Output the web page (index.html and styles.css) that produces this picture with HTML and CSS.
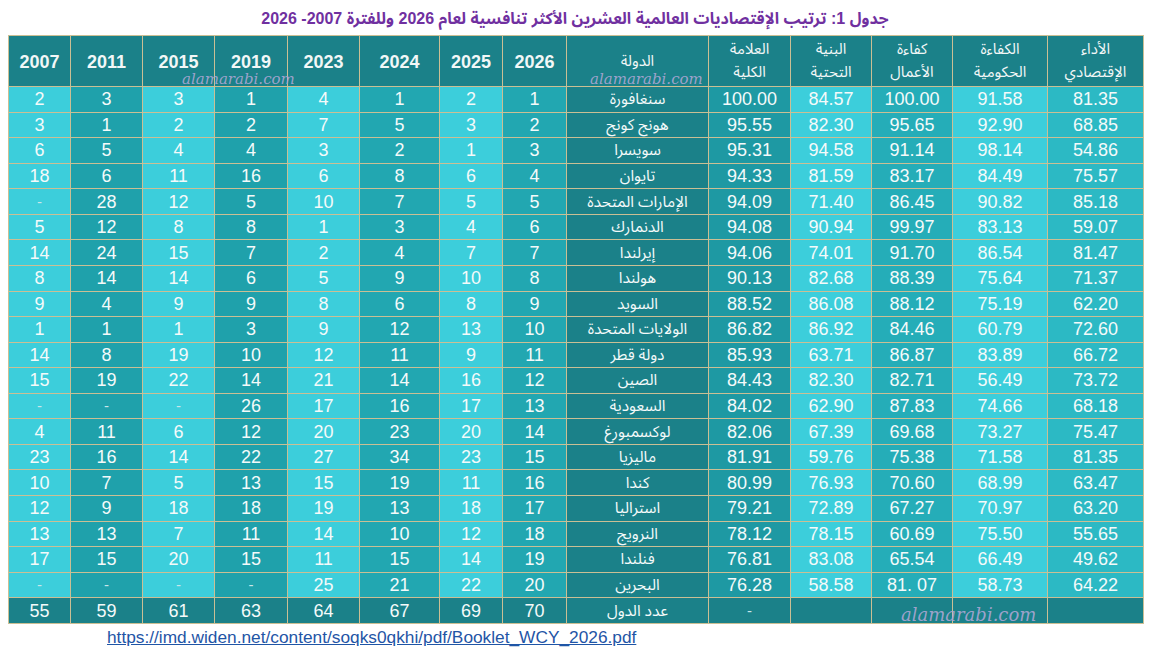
FILE: index.html
```html
<!DOCTYPE html>
<html lang="ar">
<head>
<meta charset="utf-8">
<title>جدول 1</title>
<link rel="stylesheet" href="styles.css">
</head>
<body>
<div class="page">
  <h1 class="title" dir="rtl">جدول 1:  ترتيب الإقتصاديات العالمية العشرين الأكثر تنافسية لعام 2026 وللفترة 2007- 2026</h1>
  <div class="table-wrap">
    <table class="rank">
      <colgroup>
        <col class="w62"><col class="w72"><col class="w72"><col class="w73"><col class="w72"><col class="w80"><col class="w63"><col class="w64">
        <col class="w142"><col class="w82"><col class="w81"><col class="w81"><col class="w95"><col class="w96">
      </colgroup>
      <thead>
        <tr>
          <th>2007</th><th>2011</th><th>2015</th><th>2019</th><th>2023</th><th>2024</th><th>2025</th><th>2026</th>
          <th class="ar">الدولة</th>
          <th class="ar"><span class="ln">العلامة</span><span class="ln">الكلية</span></th>
          <th class="ar"><span class="ln">البنية</span><span class="ln">التحتية</span></th>
          <th class="ar"><span class="ln">كفاءة</span><span class="ln">الأعمال</span></th>
          <th class="ar"><span class="ln">الكفاءة</span><span class="ln">الحكومية</span></th>
          <th class="ar"><span class="ln">الأداء</span><span class="ln">الإقتصادي</span></th>
        </tr>
      </thead>
      <tbody id="rows"></tbody>
    </table>
    <span class="wm wm1">alamarabi.com</span>
    <span class="wm wm2">alamarabi.com</span>
    <span class="wm wm3">alamarabi.com</span>
  </div>
  <a class="src" href="#">https://imd.widen.net/content/soqks0qkhi/pdf/Booklet_WCY_2026.pdf</a>
</div>
<script>
const data = [
["2","3","3","1","4","1","2","1","سنغافورة","100.00","84.57","100.00","91.58","81.35"],
["3","1","2","2","7","5","3","2","هونج كونج","95.55","82.30","95.65","92.90","68.85"],
["6","5","4","4","3","2","1","3","سويسرا","95.31","94.58","91.14","98.14","54.86"],
["18","6","11","16","6","8","6","4","تايوان","94.33","81.59","83.17","84.49","75.57"],
["-","28","12","5","10","7","5","5","الإمارات  المتحدة","94.09","71.40","86.45","90.82","85.18"],
["5","12","8","8","1","3","4","6","الدنمارك","94.08","90.94","99.97","83.13","59.07"],
["14","24","15","7","2","4","7","7","إيرلندا","94.06","74.01","91.70","86.54","81.47"],
["8","14","14","6","5","9","10","8","هولندا","90.13","82.68","88.39","75.64","71.37"],
["9","4","9","9","8","6","8","9","السويد","88.52","86.08","88.12","75.19","62.20"],
["1","1","1","3","9","12","13","10","الولايات المتحدة","86.82","86.92","84.46","60.79","72.60"],
["14","8","19","10","12","11","9","11","دولة قطر","85.93","63.71","86.87","83.89","66.72"],
["15","19","22","14","21","14","16","12","الصين","84.43","82.30","82.71","56.49","73.72"],
["-","-","-","26","17","16","17","13","السعودية","84.02","62.90","87.83","74.66","68.18"],
["4","11","6","12","20","23","20","14","لوكسمبورغ","82.06","67.39","69.68","73.27","75.47"],
["23","16","14","22","27","34","23","15","ماليزيا","81.91","59.76","75.38","71.58","81.35"],
["10","7","5","13","15","19","11","16","كندا","80.99","76.93","70.60","68.99","63.47"],
["12","9","18","18","19","13","18","17","استراليا","79.21","72.89","67.27","70.97","63.20"],
["13","13","7","11","14","10","12","18","النرويج","78.12","78.15","60.69","75.50","55.65"],
["17","15","20","15","11","15","14","19","فنلندا","76.81","83.08","65.54","66.49","49.62"],
["-","-","-","-","25","21","22","20","البحرين","76.28","58.58","81. 07","58.73","64.22"]
];
const total = ["55","59","61","63","64","67","69","70","عدد الدول","-","","","",""];
const cls = ["c-lt","c-dk","c-lt","c-dk","c-lt","c-md","c-lt","c-md","c-cn","c-tot","c-lt","c-bs","c-lt","c-ec"];
const tb = document.getElementById("rows");
function addRow(r, isTotal){
  const tr = document.createElement("tr");
  if (isTotal) tr.className = "total";
  r.forEach((v,i)=>{
    const td = document.createElement("td");
    td.className = cls[i] + (i===8 ? " ar" : "") + (v.trim()==="-" ? " dash" : "");
    td.textContent = v;
    tr.appendChild(td);
  });
  tb.appendChild(tr);
}
data.forEach(r=>addRow(r,false));
addRow(total,true);
</script>
</body>
</html>
```

FILE: styles.css
```css
html, body {
  margin: 0;
  padding: 0;
  background: #ffffff;
}
.page {
  padding: 0 8px;
  font-family: "Liberation Sans", Arial, sans-serif;
}
.title {
  margin: 0;
  height: 35px;
  line-height: 38px;
  text-align: center;
  font-family: "Liberation Sans", "Noto Sans Arabic", "DejaVu Sans", sans-serif;
  font-size: 16px;
  font-weight: bold;
  color: #7030a0;
}
.table-wrap {
  position: relative;
  width: 1135px;
}
.rank {
  border-collapse: collapse;
  table-layout: fixed;
  width: 1135px;
  color: #f4fafa;
}
.w62 { width: 62px; } .w72 { width: 72px; } .w73 { width: 73px; }
.w80 { width: 80px; } .w63 { width: 63px; } .w64 { width: 64px; }
.w142 { width: 142px; } .w82 { width: 82px; } .w81 { width: 81px; }
.w95 { width: 95px; } .w96 { width: 96px; }
.rank th, .rank td {
  border: 1px solid #cbbf94;
  padding: 0;
  text-align: center;
  white-space: nowrap;
}
.rank thead tr { height: 51px; }
.rank th {
  background: #1b8189;
  font-size: 18px;
  font-weight: bold;
  color: #f2f7f7;
  padding-top: 2px;
}
.rank th.ar {
  font-family: "Noto Sans Arabic", "DejaVu Sans", sans-serif;
  font-weight: normal;
  font-size: 15px;
  line-height: 23px;
  padding-top: 0;
}
.rank th .ln {
  display: block;
  line-height: 23px;
}
.rank tbody tr { height: 25.57px; }
.rank td {
  font-size: 18px;
  line-height: 22px;
}
.rank td.ar {
  font-family: "Noto Sans Arabic", "DejaVu Sans", sans-serif;
  font-size: 15.5px;
}
.c-lt { background: #3ccedb; }
.c-dk { background: #1fa1ab; }
.c-md { background: #22a7b1; }
.c-cn { background: #1b8189; }
.c-tot { background: #1e99a3; }
.c-bs { background: #25adb8; }
.c-ec { background: #2cb9c4; }
.rank td.dash { color: #c9e6ea; font-size: 15px; }
.rank tr.total td { background: #1b8189; }
.wm {
  position: absolute;
  font-family: "DejaVu Serif", "Liberation Serif", serif;
  font-style: italic;
  color: rgba(170, 166, 210, 0.92);
  white-space: nowrap;
  pointer-events: none;
}
.wm1 { left: 174px; top: 35px; font-size: 15px; }
.wm2 { left: 582px; top: 35px; font-size: 15px; }
.wm3 { left: 893px; top: 569px; font-size: 18px; }
.src {
  display: inline-block;
  margin-left: 99px;
  margin-top: 3px;
  font-size: 17.3px;
  color: #1f55a6;
  text-decoration: underline;
}
```
